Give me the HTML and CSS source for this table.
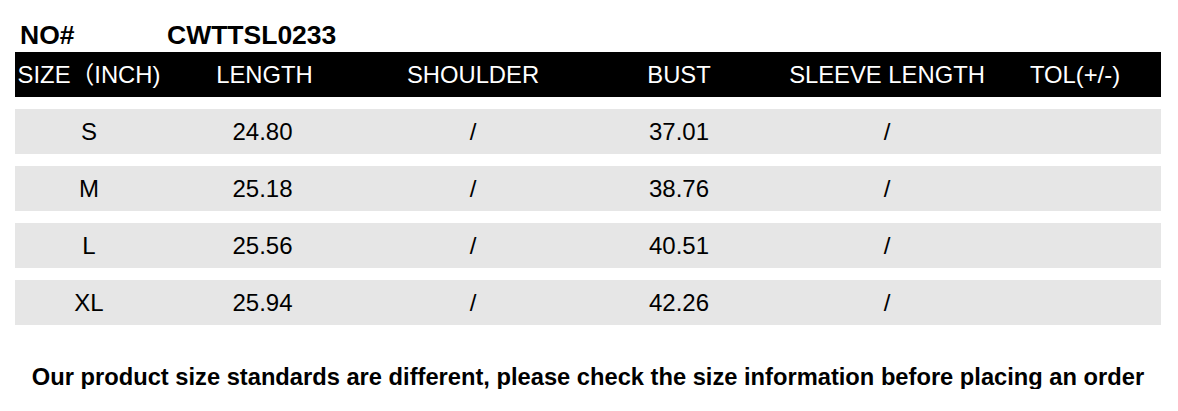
FILE: index.html
```html
<!DOCTYPE html>
<html>
<head>
<meta charset="utf-8">
<link rel="stylesheet" href="styles.css">
</head>
<body>
<div class="page">
  <div class="title">
    <span class="no">NO#</span>
    <span class="code">CWTTSL0233</span>
  </div>
  <div class="row head">
    <div>SIZE（INCH)</div>
    <div>LENGTH</div>
    <div>SHOULDER</div>
    <div>BUST</div>
    <div>SLEEVE LENGTH</div>
    <div>TOL(+/-)</div>
  </div>
  <div class="rows">
    <div class="row data"><div>S</div><div>24.80</div><div>/</div><div>37.01</div><div>/</div><div></div></div>
    <div class="row data"><div>M</div><div>25.18</div><div>/</div><div>38.76</div><div>/</div><div></div></div>
    <div class="row data"><div>L</div><div>25.56</div><div>/</div><div>40.51</div><div>/</div><div></div></div>
    <div class="row data"><div>XL</div><div>25.94</div><div>/</div><div>42.26</div><div>/</div><div></div></div>
  </div>
  <p class="note">Our product size standards are different, please check the size information before placing an order</p>
</div>
</body>
</html>
```

FILE: styles.css
```css
html, body {
  margin: 0;
  padding: 0;
  background: #ffffff;
}
.page {
  font-family: "Liberation Sans", Arial, "Noto Sans CJK SC", sans-serif;
  color: #000;
  padding: 0 17px 0 15px;
  width: 1146px;
}
.title {
  height: 31px;
  padding-top: 21px;
  font-weight: bold;
  font-size: 26.5px;
  line-height: 28px;
  display: flex;
}
.title .no {
  width: 147px;
  padding-left: 5px;
}
.row {
  display: grid;
  grid-template-columns: 148px 203px 214px 198px 218px 158px 7px;
  align-items: center;
  height: 45px;
  text-align: center;
  font-size: 24px;
  line-height: 26px;
}
.head {
  background: #000;
  color: #fff;
  font-size: 23.8px;
}
.data > div:nth-child(2) {
  padding-right: 4px;
}
.rows {
  display: flex;
  flex-direction: column;
  gap: 12px;
  margin-top: 12px;
}
.data {
  background: #e6e6e6;
}
.note {
  margin: 40px 0 0 0;
  font-weight: bold;
  font-size: 23.7px;
  line-height: 24px;
  text-align: center;
  padding-left: 0;
}
```
